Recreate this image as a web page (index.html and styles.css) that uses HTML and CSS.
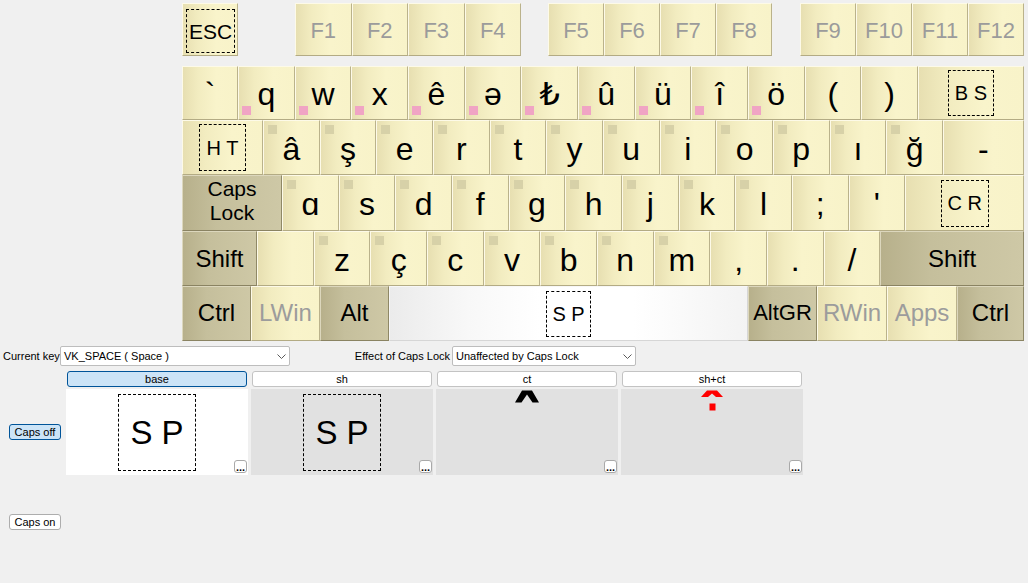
FILE: index.html
```
<!DOCTYPE html>
<html>
<head>
<meta charset="utf-8">
<link rel="stylesheet" href="styles.css">
</head>
<body>
<div class="kb">
  <div class="frow">
    <div class="key esc"><div class="bx bx-esc">ESC</div></div>
    <div class="key fk fa ga">F1</div>
    <div class="key fk fa">F2</div>
    <div class="key fk fa">F3</div>
    <div class="key fk fa">F4</div>
    <div class="key fk gb">F5</div>
    <div class="key fk">F6</div>
    <div class="key fk">F7</div>
    <div class="key fk">F8</div>
    <div class="key fk gc">F9</div>
    <div class="key fk">F10</div>
    <div class="key fk">F11</div>
    <div class="key fk">F12</div>
  </div>
  <div class="row r1">
    <div class="key w56">`</div>
    <div class="key"><span class="pink"></span>q</div>
    <div class="key"><span class="pink"></span>w</div>
    <div class="key"><span class="pink"></span>x</div>
    <div class="key"><span class="pink"></span>ê</div>
    <div class="key"><span class="pink"></span>ə</div>
    <div class="key"><span class="pink"></span>₺</div>
    <div class="key"><span class="pink"></span>û</div>
    <div class="key"><span class="pink"></span>ü</div>
    <div class="key"><span class="pink"></span>î</div>
    <div class="key"><span class="pink"></span>ö</div>
    <div class="key">(</div>
    <div class="key">)</div>
    <div class="key fill boxed"><div class="bx">B S</div></div>
  </div>
  <div class="row r2">
    <div class="key w81 boxed"><div class="bx bx-ht">H T</div></div>
    <div class="key"><span class="sq"></span>â</div>
    <div class="key"><span class="sq"></span>ş</div>
    <div class="key"><span class="sq"></span>e</div>
    <div class="key"><span class="sq"></span>r</div>
    <div class="key"><span class="sq"></span>t</div>
    <div class="key"><span class="sq"></span>y</div>
    <div class="key"><span class="sq"></span>u</div>
    <div class="key"><span class="sq"></span>i</div>
    <div class="key"><span class="sq"></span>o</div>
    <div class="key"><span class="sq"></span>p</div>
    <div class="key"><span class="sq"></span>ı</div>
    <div class="key"><span class="sq"></span>ğ</div>
    <div class="key fill">-</div>
  </div>
  <div class="row r3">
    <div class="key w100 mod caps">Caps<br>Lock</div>
    <div class="key"><span class="sq"></span>ɑ</div>
    <div class="key"><span class="sq"></span>s</div>
    <div class="key"><span class="sq"></span>d</div>
    <div class="key"><span class="sq"></span>f</div>
    <div class="key"><span class="sq"></span>g</div>
    <div class="key"><span class="sq"></span>h</div>
    <div class="key"><span class="sq"></span>j</div>
    <div class="key"><span class="sq"></span>k</div>
    <div class="key"><span class="sq"></span>l</div>
    <div class="key">;</div>
    <div class="key">'</div>
    <div class="key fill boxed"><div class="bx bx-cr">C R</div></div>
  </div>
  <div class="row r4">
    <div class="key w75 mod">Shift</div>
    <div class="key"></div>
    <div class="key"><span class="sq"></span>z</div>
    <div class="key"><span class="sq"></span>ç</div>
    <div class="key"><span class="sq"></span>c</div>
    <div class="key"><span class="sq"></span>v</div>
    <div class="key"><span class="sq"></span>b</div>
    <div class="key"><span class="sq"></span>n</div>
    <div class="key"><span class="sq"></span>m</div>
    <div class="key">,</div>
    <div class="key">.</div>
    <div class="key">/</div>
    <div class="key fill mod">Shift</div>
  </div>
  <div class="row r5">
    <div class="key w69 mod">Ctrl</div>
    <div class="key w69 win">LWin</div>
    <div class="key w69 mod">Alt</div>
    <div class="key w359 space boxed"><div class="bx bx-sp">S P</div></div>
    <div class="key w69 mod altgr">AltGR</div>
    <div class="key w70 win">RWin</div>
    <div class="key w70 win">Apps</div>
    <div class="key fill mod">Ctrl</div>
  </div>
</div>

<div class="panel">
  <div class="top">
    <div class="lab1">Current key</div>
    <div class="sel sel1"><span>VK_SPACE ( Space )</span><svg class="chev" viewBox="0 0 9 5"><polyline points="0.5,0.5 4.5,4.5 8.5,0.5" fill="none" stroke="#5a5a5a" stroke-width="1"/></svg></div>
    <div class="lab2">Effect of Caps Lock</div>
    <div class="sel sel2"><span>Unaffected by Caps Lock</span><svg class="chev" viewBox="0 0 9 5"><polyline points="0.5,0.5 4.5,4.5 8.5,0.5" fill="none" stroke="#5a5a5a" stroke-width="1"/></svg></div>
  </div>
  <div class="grid">
    <div class="corner"></div>
    <div class="hd on">base</div>
    <div class="hd">sh</div>
    <div class="hd">ct</div>
    <div class="hd">sh+ct</div>

    <div class="btn on">Caps off</div>
    <div class="cell wt"><div class="bigbx">S P</div><div class="dots">...</div></div>
    <div class="cell"><div class="bigbx">S P</div><div class="dots">...</div></div>
    <div class="cell topc"><svg class="caret" width="24" height="13" viewBox="0 0 24 13"><path d="M0 12.5 L7 0.5 L17 0.5 L24 12.5 L17.5 12.5 L12 4.5 L6.5 12.5 Z" fill="#000"/></svg><div class="dots">...</div></div>
    <div class="cell topc"><svg class="caret" width="22" height="21" viewBox="0 0 22 21"><path d="M0 7 L6 0.5 L16 0.5 L22 7 L15 7 L11 3.5 L7 7 Z" fill="#ff0000"/><rect x="8.5" y="13.5" width="6" height="7" fill="#ff0000"/></svg><div class="dots">...</div></div>

    <div class="btn capson">Caps on</div>
  </div>
</div>
</body>
</html>
```

FILE: styles.css
```
* { box-sizing: border-box; }

body {
  margin: 0;
  background: #f0f0f0;
  font-family: "Liberation Sans", "DejaVu Sans", Arial, sans-serif;
  color: #000;
  width: 1028px;
  height: 583px;
  overflow: hidden;
}

.kb {
  margin-left: 182px;
  width: 842px;
  padding-top: 3px;
}

.frow, .row { display: flex; }
.frow { height: 53px; }
.r1 { height: 54px; margin-top: 10px; }
.r2 { height: 55px; }
.r3 { height: 56px; }
.r4 { height: 55px; }
.r5 { height: 55px; }

.key {
  flex: none;
  width: 56.667px;
  height: 100%;
  position: relative;
  display: flex;
  justify-content: center;
  align-items: flex-start;
  border: 1px solid;
  border-color: #fdfae8 #bab28b #b3ab84 #fdfae8;
  background: linear-gradient(to right, #e7dfb1 0%, #f2ecc0 28%, #f9f4cb 62%, #f8f3c9 100%);
  font-size: 32px;
  line-height: 32px;
  padding-top: 12px;
  white-space: nowrap;
}
.r1 .key { padding-top: 11px; }

.w56 { width: 56px; }
.w69 { width: 69px; }
.w70 { width: 70px; }
.w75 { width: 75px; }
.w81 { width: 81px; }
.w100 { width: 100px; }
.w359 { width: 359px; }
.fill { flex: 1 1 0; width: auto; min-width: 0; }

.fk {
  width: 56px;
  font-size: 22px;
  line-height: 22px;
  padding-top: 16px;
  color: #9b9b9b;
}
.fa { width: 56.5px; }
.ga { margin-left: 57px; }
.gb { margin-left: 27px; }
.gc { margin-left: 28px; }

.esc {
  width: 56px;
  justify-content: flex-start;
  padding: 5px 0 0 3px;
}

.bx {
  flex: none;
  width: 46px;
  height: 46px;
  border: 1px dashed #000;
  display: flex;
  align-items: center;
  justify-content: center;
  font-size: 20px;
  line-height: 20px;
}
.bx-esc { width: 49px; height: 44px; font-size: 21px; line-height: 21px; }
.bx-ht { width: 47px; height: 47px; }
.bx-cr { width: 48px; height: 47px; }
.bx-sp { width: 45px; height: 46px; }
.r1 .key.boxed, .boxed { align-items: center; padding: 0; }

.mod {
  background: linear-gradient(to right, #b7b08b 0%, #c5bf9c 35%, #cec8a6 100%);
  border-color: #dcd7bd #8f8866 #8a8362 #dcd7bd;
  font-size: 24px;
  line-height: 24px;
  padding-top: 15px;
}
.caps {
  font-size: 21px;
  line-height: 24px;
  padding-top: 1px;
  text-align: center;
  white-space: normal;
}
.win {
  font-size: 24px;
  line-height: 24px;
  color: #9c9c9c;
  padding-top: 14px;
}
.r5 .mod { padding-top: 14px; }
.r5 .altgr { font-size: 22px; line-height: 22px; padding-top: 15px; }

.space {
  background: linear-gradient(to right, #ebebeb 0%, #f8f8f8 22%, #ffffff 42%, #ffffff 68%, #f3f3f3 100%);
  border-color: #f7f7f7 #d6d6d6 #d6d6d6 #f7f7f7;
}

.pink {
  position: absolute;
  left: 3px;
  bottom: 4px;
  width: 9px;
  height: 9px;
  background: #f0a4c4;
}
.sq {
  position: absolute;
  left: 4px;
  top: 4px;
  width: 9px;
  height: 9px;
  background: #d7d1a8;
}

/* panel */
.panel { margin-top: 5px; font-size: 11px; }
.top {
  display: flex;
  align-items: center;
  height: 20px;
}
.lab1 { width: 60px; padding-left: 3px; }
.sel {
  height: 20px;
  border: 1px solid #bdbdbd;
  border-radius: 2px;
  background: #fff;
  display: flex;
  align-items: center;
  justify-content: space-between;
  padding: 0 3px;
}
.sel1 { width: 230px; }
.lab2 { margin-left: 63px; width: 97px; text-align: right; }
.sel2 { margin-left: 2px; width: 184px; }
.chev { width: 9px; height: 5px; }

.grid {
  display: grid;
  grid-template-columns: 63px repeat(4, 182px);
  grid-template-rows: 16px 86px 86px;
  column-gap: 3px;
  row-gap: 2px;
  margin-top: 5px;
}
.hd {
  margin: 0 1px;
  border: 1px solid #c3c3c3;
  border-radius: 3px;
  background: #fff;
  display: flex;
  align-items: center;
  justify-content: center;
  line-height: 14px;
}
.hd.on { background: #cce4f7; border-color: #005499; }

.cell {
  position: relative;
  background: #e1e1e1;
  display: flex;
  justify-content: center;
  align-items: center;
}
.cell.wt { background: #fff; }
.cell.topc { align-items: flex-start; padding-top: 1px; }
.bigbx {
  width: 78px;
  height: 77px;
  border: 1px dashed #000;
  display: flex;
  align-items: center;
  justify-content: center;
  font-size: 33px;
  line-height: 33px;
}
.dots {
  position: absolute;
  right: 1px;
  bottom: 2px;
  width: 13px;
  height: 13px;
  border: 1px solid #a9a9a9;
  border-radius: 3px;
  background: #fff;
  font-size: 11px;
  font-weight: bold;
  line-height: 11px;
  padding-top: 1px;
  text-align: center;
}

.btn {
  justify-self: start;
  align-self: center;
  margin-left: 9px;
  width: 52px;
  height: 16px;
  border: 1px solid #adadad;
  border-radius: 3px;
  background: #fff;
  display: flex;
  align-items: center;
  justify-content: center;
}
.btn.on { background: #cce4f7; border-color: #005499; }
.btn.capson { align-self: start; margin-top: 37px; }
```
